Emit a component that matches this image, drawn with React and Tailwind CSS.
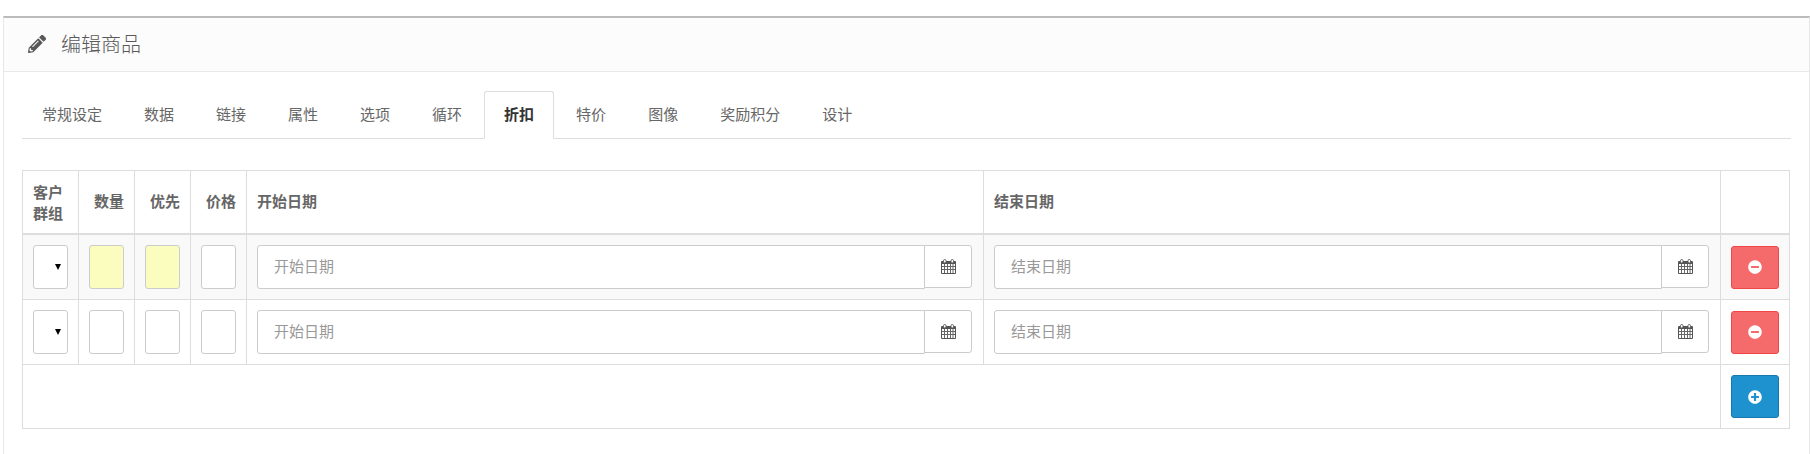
import React from 'react';
import { FaPencilAlt, FaMinusCircle, FaPlusCircle } from 'react-icons/fa';

const tabs = ['常规设定', '数据', '链接', '属性', '选项', '循环', '折扣', '特价', '图像', '奖励积分', '设计'];

function CalendarIcon() {
  return (
    <svg width="15" height="15" viewBox="0 0 15 15" fill="none" className="ml-px">
      <path d="M.5 2.5h14v12H.5z" fill="#fff" stroke="#555" />
      <path d="M1 2h13v3H1z" fill="#555" />
      <path d="M3.5 5v9M6.5 5v9M9.5 5v9M12 5v9M1 7.5h13M1 10.5h13" stroke="#666" strokeWidth="1" />
      <rect x="2.5" y="0.5" width="2.5" height="3.5" rx="1.2" fill="#fff" stroke="#555" strokeWidth="0.9" />
      <rect x="10" y="0.5" width="2.5" height="3.5" rx="1.2" fill="#fff" stroke="#555" strokeWidth="0.9" />
    </svg>
  );
}

function SmallInput({ required }) {
  return (
    <input
      type="text"
      className={`block w-[35px] h-[44px] border border-[#ccc] rounded-[3px] ${required ? 'bg-[#fafdbd]' : 'bg-white'}`}
    />
  );
}

function DateField({ placeholder }) {
  return (
    <div className="flex items-start mr-px">
      <input
        type="text"
        placeholder={placeholder}
        className="flex-1 min-w-0 h-[44px] px-4 pb-[3px] bg-white border border-[#ccc] rounded-l-[3px] text-[15px] outline-none placeholder:text-[#999]"
      />
      <button className="w-[48px] h-[43px] -ml-px flex items-center justify-center bg-white border border-[#ccc] rounded-r-[3px]">
        <CalendarIcon />
      </button>
    </div>
  );
}

function DiscountRow({ first }) {
  const cell = 'border border-[#ddd] p-[10px]';
  return (
    <tr className={first ? 'bg-[#f9f9f9]' : 'bg-white'}>
      <td className={cell}>
        <div className="relative w-[35px] h-[44px] bg-white border border-[#ccc] rounded-[3px]">
          <span className="absolute left-[21px] top-[18px] w-0 h-0 border-x-[3px] border-t-[6px] border-x-transparent border-t-black" />
        </div>
      </td>
      <td className={cell}><SmallInput required={first} /></td>
      <td className={cell}><SmallInput required={first} /></td>
      <td className={cell}><SmallInput /></td>
      <td className={cell}><DateField placeholder="开始日期" /></td>
      <td className={cell}><DateField placeholder="结束日期" /></td>
      <td className={cell}>
        <button className="w-[48px] h-[43px] flex items-center justify-center bg-[#f56b6b] border border-[#f24545] rounded-[3px] text-white">
          <FaMinusCircle size={14} />
        </button>
      </td>
    </tr>
  );
}

export default function App() {
  return (
    <div className="h-[454px] overflow-hidden bg-white pt-4 pl-[3px] pr-[1px] text-[15px] text-[#666] font-['Noto_Sans_CJK_SC','Open_Sans',sans-serif]">
      <div className="h-full border-x border-t-2 border-[#e8e8e8] border-t-[#bbb]">
        {/* Heading */}
        <div className="h-[54px] flex items-center gap-[15px] pl-[24px] pb-[2px] bg-[#fcfcfc] border-b border-[#e8e8e8] text-[20px] font-light text-[#595959]">
          <FaPencilAlt size={18} />
          <span>编辑商品</span>
        </div>

        <div className="pt-[19px] pl-[18px] pr-[18px]">
          {/* Tabs */}
          <ul className="flex border-b border-[#ddd]">
            {tabs.map((tab) => (
              <li key={tab} className="mr-[2px] -mb-px">
                <a
                  className={`block px-[19px] h-[48px] leading-[44px] border rounded-t-[3px] ${
                    tab === '折扣'
                      ? 'bg-white border-[#ddd] border-b-white text-[#333] font-bold'
                      : 'border-transparent text-[#666]'
                  }`}
                >
                  {tab}
                </a>
              </li>
            ))}
          </ul>

          {/* Discount table */}
          <table className="mt-[31px] w-[1768px] table-fixed border-collapse">
            <thead>
              <tr className="text-[#666] font-bold">
                <th className="w-[56px] border border-b-2 border-[#ddd] p-[10px] text-left leading-[21px]">客户群组</th>
                <th className="w-[56px] border border-b-2 border-[#ddd] p-[10px] pb-[12px] text-right">数量</th>
                <th className="w-[56px] border border-b-2 border-[#ddd] p-[10px] pb-[12px] text-right">优先</th>
                <th className="w-[56px] border border-b-2 border-[#ddd] p-[10px] pb-[12px] text-right">价格</th>
                <th className="border border-b-2 border-[#ddd] p-[10px] pb-[12px] text-left">开始日期</th>
                <th className="border border-b-2 border-[#ddd] p-[10px] pb-[12px] text-left">结束日期</th>
                <th className="w-[69px] border border-b-2 border-[#ddd] p-[10px]"></th>
              </tr>
            </thead>
            <tbody>
              <DiscountRow first />
              <DiscountRow />
              <tr>
                <td colSpan={6} className="border border-[#ddd]"></td>
                <td className="border border-[#ddd] p-[10px]">
                  <button className="w-[48px] h-[43px] flex items-center justify-center bg-[#1e91cf] border border-[#1978ab] rounded-[3px] text-white">
                    <FaPlusCircle size={14} />
                  </button>
                </td>
              </tr>
            </tbody>
          </table>
        </div>
      </div>
    </div>
  );
}
